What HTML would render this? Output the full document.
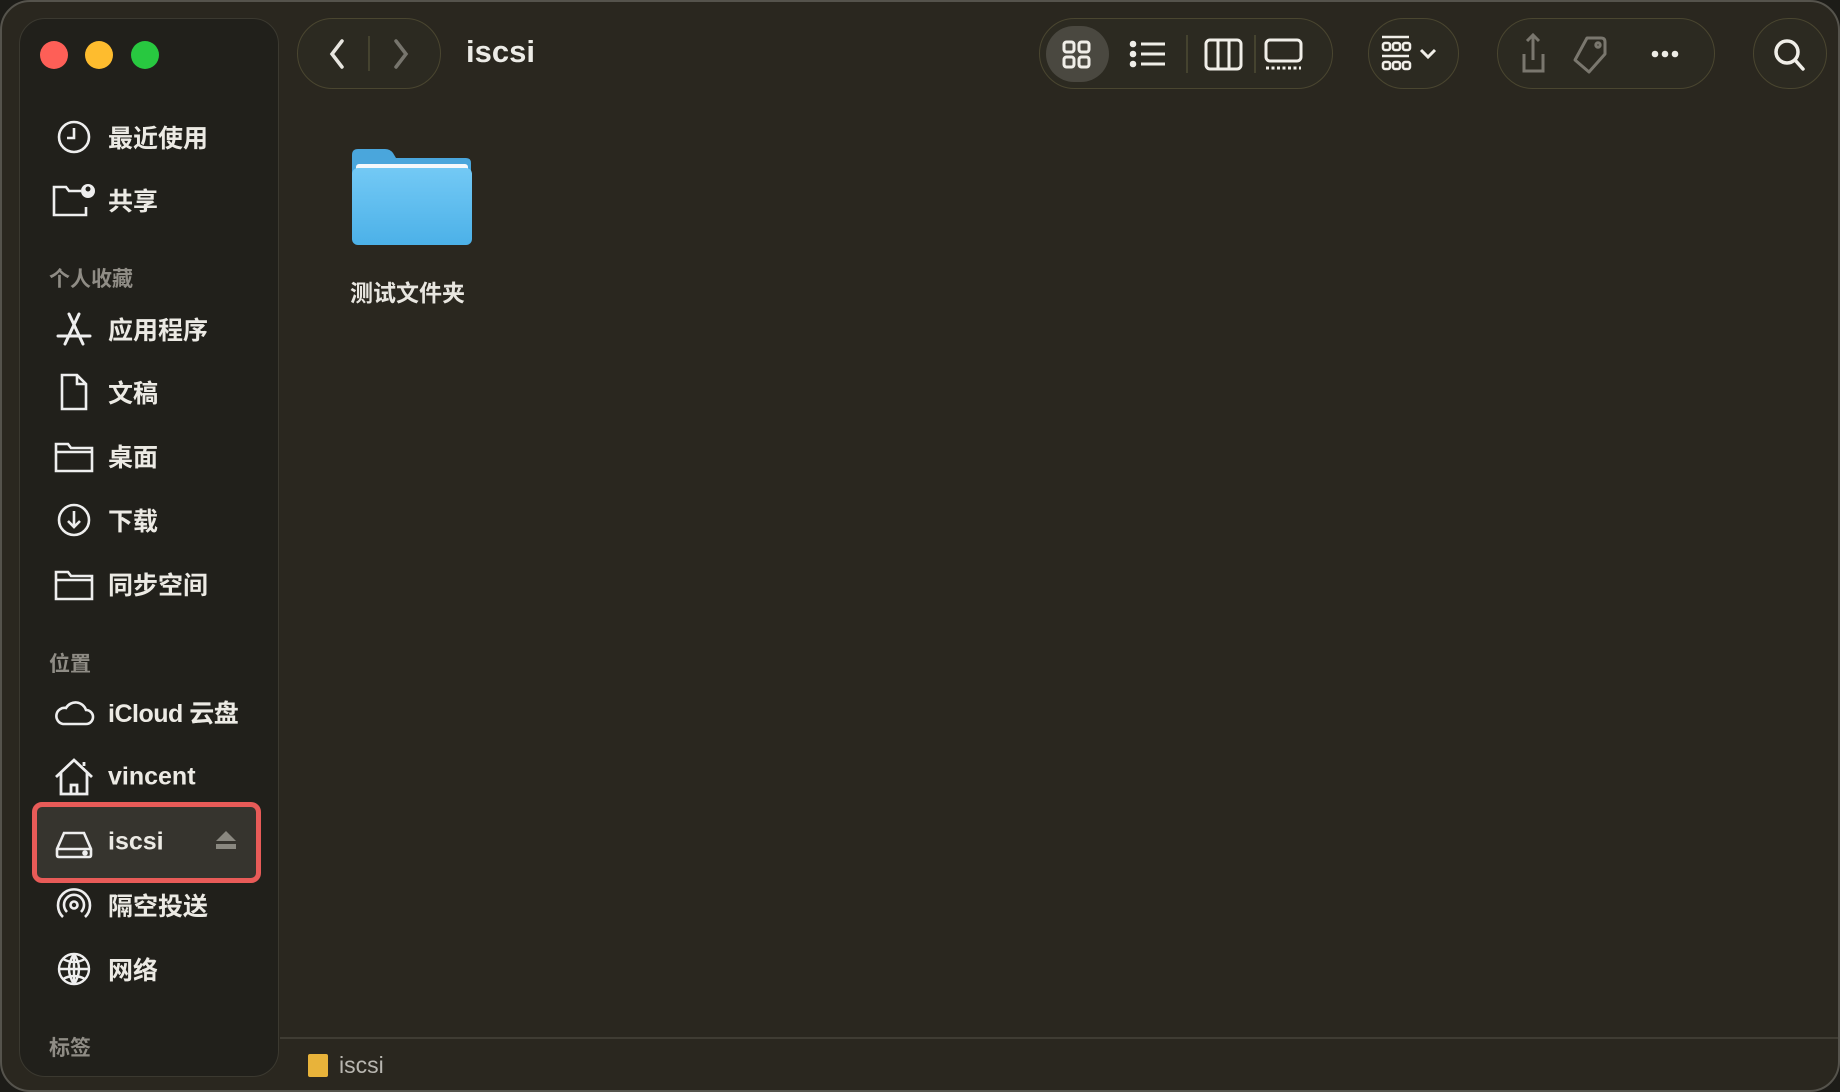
<!DOCTYPE html>
<html><head><meta charset="utf-8"><style>
*{margin:0;padding:0;box-sizing:border-box}
body{width:1840px;height:1092px;background:#1d1c18;overflow:hidden;font-family:"Liberation Sans","Noto Sans CJK SC",sans-serif;position:relative}
.win{position:absolute;left:0;top:0;width:1840px;height:1092px;background:#2a271f;border-radius:30px;border:2px solid #55534c;overflow:hidden}
.side{position:absolute;left:17px;top:16px;width:260px;height:1059px;background:#21201b;border:1.5px solid #3b3930;border-radius:26px}
.tl{position:absolute;top:39px;width:28px;height:28px;border-radius:50%}
.pill{position:absolute;top:16px;height:71px;border:1.5px solid #4a4630;border-radius:36px;background:#2c2a21}
.item{position:absolute;left:106px;color:#eceae4;font-size:25px;font-weight:bold;transform:translateY(-50%);white-space:nowrap}
.hdr{position:absolute;left:47px;color:#8f8c85;font-size:21px;font-weight:bold;transform:translateY(-50%)}
.ic{position:absolute;left:51px;width:42px;height:42px;transform:translateY(-50%)}
svg{overflow:visible}
</style></head><body>
<div class="win">
<div class="side"></div>
<div class="tl" style="left:38px;background:#fe5f57"></div>
<div class="tl" style="left:83px;background:#febc2e"></div>
<div class="tl" style="left:129px;background:#28c840"></div>

<div class="pill" style="left:295px;width:144px"></div>
<svg style="position:absolute;left:295px;top:16px" width="144" height="71"><path d="M45 23 L35 36 L45 49" stroke="#e8e6e0" stroke-width="3.5" fill="none" stroke-linecap="round"/><line x1="72" y1="18" x2="72" y2="53" stroke="#45432f" stroke-width="2"/><path d="M99 23 L109 36 L99 49" stroke="#77756d" stroke-width="3.5" fill="none" stroke-linecap="round"/></svg>
<div style="position:absolute;left:464px;top:32px;color:#ecebe6;font-size:31px;font-weight:bold">iscsi</div>

<div class="pill" style="left:1037px;width:294px"></div>
<div style="position:absolute;left:1044px;top:24px;width:63px;height:56px;border-radius:28px;background:#4a4840"></div>
<svg style="position:absolute;left:1037px;top:16px" width="294" height="71" fill="none" stroke="#f0eee8" stroke-width="3">
<rect x="25" y="24" width="10" height="10" rx="2.5"/><rect x="40" y="24" width="10" height="10" rx="2.5"/><rect x="25" y="39" width="10" height="10" rx="2.5"/><rect x="40" y="39" width="10" height="10" rx="2.5"/>
<circle cx="94" cy="26" r="1.8" fill="#f0eee8"/><circle cx="94" cy="36" r="1.8" fill="#f0eee8"/><circle cx="94" cy="46" r="1.8" fill="#f0eee8"/>
<path d="M102 26H126M102 36H126M102 46H126"/>
<line x1="148" y1="17" x2="148" y2="55" stroke="#45432f" stroke-width="2"/>
<rect x="167" y="22" width="35" height="29" rx="4"/><path d="M179 22V51M190 22V51"/>
<line x1="216" y1="17" x2="216" y2="55" stroke="#45432f" stroke-width="2"/>
<rect x="227" y="22" width="35" height="21" rx="4"/><path d="M227 50H262" stroke-dasharray="3 2.5"/>
</svg>

<div class="pill" style="left:1366px;width:91px"></div>
<svg style="position:absolute;left:1366px;top:16px" width="91" height="71" fill="none" stroke="#f0eee8" stroke-width="2.5">
<path d="M14 19H41M14 38H41"/>
<rect x="15" y="25" width="7" height="7" rx="2"/><rect x="25" y="25" width="7" height="7" rx="2"/><rect x="35" y="25" width="7" height="7" rx="2"/>
<rect x="15" y="44" width="7" height="7" rx="2"/><rect x="25" y="44" width="7" height="7" rx="2"/><rect x="35" y="44" width="7" height="7" rx="2"/>
<path d="M53 32L60 39L67 32" stroke-width="3"/>
</svg>

<div class="pill" style="left:1495px;width:218px"></div>
<svg style="position:absolute;left:1495px;top:16px" width="218" height="71" fill="none" stroke="#7a776e" stroke-width="3">
<path d="M27 36V53H46V36M36 17V42M30 23L36 17L42 23"/>
<path d="M90 20L104 20Q108 20 108 24L108 36L92 54L78 42Z" stroke-linejoin="round" transform="rotate(0)"/><circle cx="101" cy="27" r="2.2"/>
<g fill="#eeece6" stroke="none"><circle cx="158" cy="36" r="3.3"/><circle cx="168" cy="36" r="3.3"/><circle cx="178" cy="36" r="3.3"/></g>
</svg>

<div class="pill" style="left:1751px;width:74px"></div>
<svg style="position:absolute;left:1751px;top:16px" width="74" height="71" fill="none" stroke="#f0eee8" stroke-width="3.5"><circle cx="34" cy="34" r="11"/><path d="M42 42L50 51" stroke-linecap="round"/></svg>

<!-- folder -->
<svg style="position:absolute;left:350px;top:147px" width="120" height="96"><defs><linearGradient id="g" x1="0" y1="0" x2="0" y2="1"><stop offset="0" stop-color="#73c9f5"/><stop offset="1" stop-color="#4cb1e8"/></linearGradient></defs>
<path d="M6 0H33Q38 0 41 4L44 9H114Q119 9 119 14V30H0V6Q0 0 6 0Z" fill="#4aa6dc"/>
<rect x="4" y="15" width="112" height="20" rx="3" fill="#f4f8fb"/>
<rect x="0" y="19" width="120" height="77" rx="6" fill="url(#g)"/></svg>
<div style="position:absolute;left:348px;top:272px;color:#e8e6e0;font-size:23px;font-weight:bold">测试文件夹</div>

<!-- sidebar -->
<svg class="ic" style="top:135px" viewBox="0 0 42 42" fill="none" stroke="#eee" stroke-width="2.6"><circle cx="21" cy="21" r="15"/><path d="M21 12V22H14"/></svg>
<div class="item" style="top:135px">最近使用</div>
<svg class="ic" style="top:198px" viewBox="0 0 42 42" fill="none" stroke="#eee" stroke-width="2.6"><path d="M33 28V36H1V8H13L16 12H28"/><circle cx="35" cy="12" r="7" fill="#eee" stroke="none"/><circle cx="35" cy="10" r="2.5" fill="#21201b" stroke="none"/></svg>
<div class="item" style="top:198px">共享</div>
<div class="hdr" style="top:276px">个人收藏</div>
<svg class="ic" style="top:327px" viewBox="0 0 42 42" fill="none" stroke="#eee" stroke-width="3" stroke-linecap="round"><path d="M16 6L30 36M26 6L12 36M5 28H37"/></svg>
<div class="item" style="top:327px">应用程序</div>
<svg class="ic" style="top:390px" viewBox="0 0 42 42" fill="none" stroke="#eee" stroke-width="2.6"><path d="M9 4H24L33 13V38H9Z M24 4V13H33"/></svg>
<div class="item" style="top:390px">文稿</div>
<svg class="ic" style="top:454px" viewBox="0 0 42 42" fill="none" stroke="#eee" stroke-width="2.6"><path d="M3 9H15L18 13H39V36H3Z M3 17H39"/></svg>
<div class="item" style="top:454px">桌面</div>
<svg class="ic" style="top:518px" viewBox="0 0 42 42" fill="none" stroke="#eee" stroke-width="2.6"><circle cx="21" cy="21" r="15"/><path d="M21 12V28M15 22L21 28L27 22"/></svg>
<div class="item" style="top:518px">下载</div>
<svg class="ic" style="top:582px" viewBox="0 0 42 42" fill="none" stroke="#eee" stroke-width="2.6"><path d="M3 9H15L18 13H39V36H3Z M3 17H39"/></svg>
<div class="item" style="top:582px">同步空间</div>
<div class="hdr" style="top:661px">位置</div>
<svg class="ic" style="top:710px" viewBox="0 0 42 42" fill="none" stroke="#eee" stroke-width="2.6"><path d="M10 33H33A7 7 0 0 0 33 19A11 11 0 0 0 13 17A8 8 0 0 0 10 33Z"/></svg>
<div class="item" style="top:710px;letter-spacing:-0.5px">iCloud 云盘</div>
<svg class="ic" style="top:775px" viewBox="0 0 42 42" fill="none" stroke="#eee" stroke-width="2.8"><path d="M3 21L21 4L39 21M8 17V38H34V17M18 38V29H24V38M31 10V6"/></svg>
<div class="item" style="top:775px">vincent</div>

<div style="position:absolute;left:30px;top:800px;width:229px;height:81px;border:5px solid #e85b58;border-radius:10px;background:#36342e"></div>
<svg class="ic" style="top:840px" viewBox="0 0 42 42" fill="none" stroke="#eee" stroke-width="2.6"><path d="M4 28L11 12H31L38 28V34Q38 36 36 36H6Q4 36 4 34Z M4 28H38"/><circle cx="32" cy="32" r="1.5" fill="#eee"/></svg>
<div class="item" style="top:840px">iscsi</div>
<svg style="position:absolute;left:213px;top:829px" width="22" height="20"><path d="M11 0L21 10H1Z" fill="#8a8880"/><rect x="1" y="13" width="20" height="5" fill="#8a8880"/></svg>

<svg class="ic" style="top:903px" viewBox="0 0 42 42" fill="none" stroke="#eee" stroke-width="2.6"><circle cx="21" cy="21" r="3.5"/><path d="M14 28A10 10 0 1 1 28 28M10 33A16 16 0 1 1 32 33"/></svg>
<div class="item" style="top:903px">隔空投送</div>
<svg class="ic" style="top:967px" viewBox="0 0 42 42" fill="none" stroke="#eee" stroke-width="2.4"><circle cx="21" cy="21" r="15"/><path d="M6 21H36M21 6V36M10 11Q21 17 32 11M10 31Q21 25 32 31M21 6Q11 21 21 36M21 6Q31 21 21 36"/></svg>
<div class="item" style="top:967px">网络</div>
<div class="hdr" style="top:1045px">标签</div>

<div style="position:absolute;left:278px;top:1035px;width:1562px;height:1.5px;background:#3f3c33"></div>
<div style="position:absolute;left:306px;top:1052px;width:20px;height:23px;background:#e8b33a;border-radius:2px"></div>
<div style="position:absolute;left:337px;top:1050px;color:#b8b6b0;font-size:23px">iscsi</div>
</div>
</body></html>
